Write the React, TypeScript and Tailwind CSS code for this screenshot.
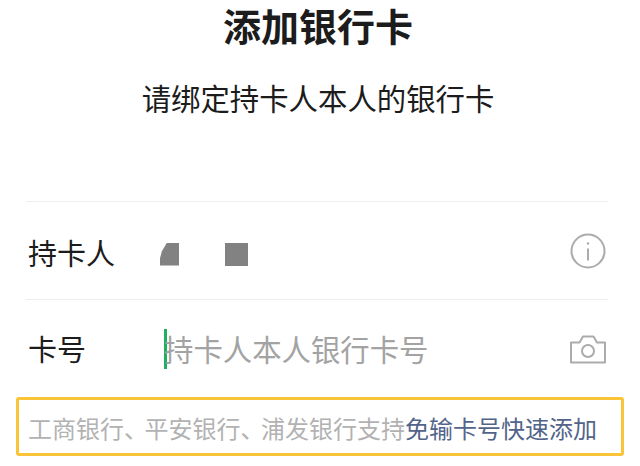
const cjk = "font-['Noto_Sans_CJK_SC','Noto_Sans_CJK_JP',sans-serif]";

function InfoIcon() {
  return (
    <svg width="36" height="36" viewBox="0 0 36 36" fill="none" stroke="#ababab" strokeWidth="2">
      <circle cx="18" cy="18" r="16.5" />
      <path d="M18 15.5v12" />
      <circle cx="18" cy="10.5" r="1.2" fill="#ababab" stroke="none" />
    </svg>
  );
}

function CameraIcon() {
  return (
    <svg width="36" height="30" viewBox="0 0 36 30" fill="none" stroke="#ababab" strokeWidth="2">
      <path d="M1 8.5h8.5l3.5-6h10.5l3.5 6H35v20H1z" strokeLinejoin="round" />
      <circle cx="18" cy="17" r="6" />
    </svg>
  );
}

export default function App() {
  return (
    <div className={`h-[466px] w-[640px] overflow-hidden bg-white ${cjk}`}>
      <h1 className="h-[56px] pr-[4px] text-center text-[38px] font-bold leading-[50px] text-[#1c1c1c]">添加银行卡</h1>
      <p className="mt-[20px] pr-[4px] text-center text-[29.4px] leading-[42px] text-[#1c1c1c]">请绑定持卡人本人的银行卡</p>

      <div className="mx-[26px] mt-[83px] w-[582px] border-t border-[#eeeeee]">
        <div className="flex h-[98px] items-center border-b border-[#eeeeee]">
          <span className="w-[134px] pl-[2px] pt-[3px] text-[29px] leading-none text-[#1c1c1c]">持卡人</span>
          {/* redacted name blocks */}
          <div className="mt-[7px] flex items-center gap-[46px]">
            <div className="h-[23px] w-[19px] bg-[#828282] [clip-path:polygon(37%_0,100%_0,100%_100%,0_100%,0_68%,10%_38%)]" />
            <div className="h-[23px] w-[23px] bg-[#828282]" />
          </div>
          <div className="ml-auto mr-[2px] flex"><InfoIcon /></div>
        </div>
        <div className="flex h-[97px] items-center">
          <span className="w-[138px] pl-[2px] text-[29px] leading-none text-[#1c1c1c]">卡号</span>
          <div className="h-[40px] w-[3px] bg-[#1db060]" />
          <span className="-ml-[3px] text-[29.4px] leading-none text-[#a3a3a3]">持卡人本人银行卡号</span>
          <div className="ml-auto mr-[2px] flex"><CameraIcon /></div>
        </div>
      </div>

      <div className="mx-[16px] h-[59px] w-[608px] rounded-[3px] border-[3px] border-[#f9c437] pl-[9px] text-[24px] leading-[56px] text-[#b2b2b2]">
        工商银行<span className="tracking-[-3.5px]">、</span>平安银行<span className="tracking-[-3.5px]">、</span>浦发银行支持<span className="text-[#53648a]">免输卡号快速添加</span>
      </div>
    </div>
  );
}
